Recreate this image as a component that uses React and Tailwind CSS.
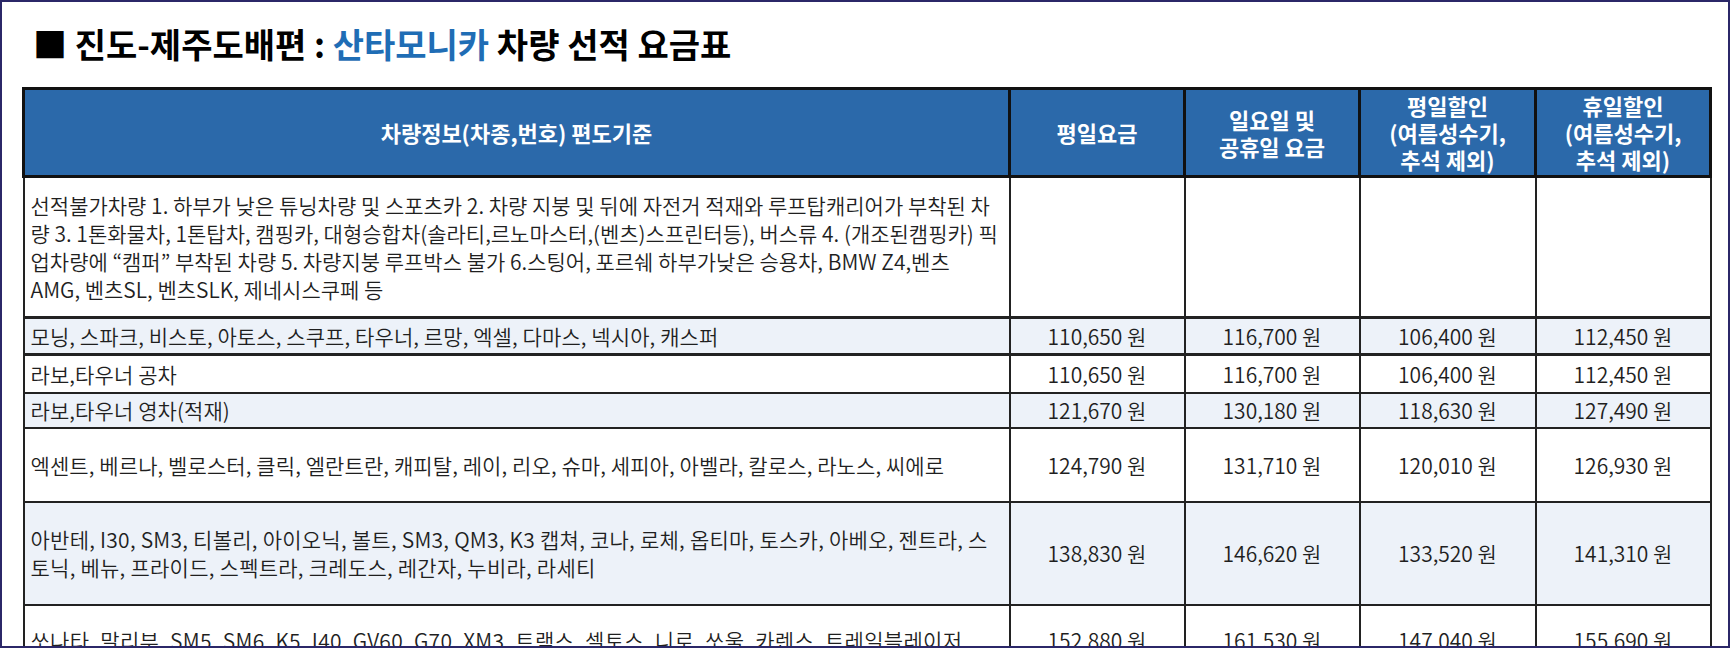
import React from "react";

const rows = [
  {
    text: "선적불가차량 1. 하부가 낮은 튜닝차량 및 스포츠카 2. 차량 지붕 및 뒤에 자전거 적재와 루프탑캐리어가 부착된 차량 3. 1톤화물차, 1톤탑차, 캠핑카, 대형승합차(솔라티,르노마스터,(벤츠)스프린터등), 버스류 4. (개조된캠핑카) 픽업차량에 “캠퍼” 부착된 차량 5. 차량지붕 루프박스 불가 6.스팅어, 포르쉐 하부가낮은 승용차, BMW Z4,벤츠 AMG, 벤츠SL, 벤츠SLK, 제네시스쿠페 등",
    prices: ["", "", "", ""],
    h: "h-[141px]",
    bg: "bg-white",
    tr: "tracking-[0px]",
  },
  {
    text: "모닝, 스파크, 비스토, 아토스, 스쿠프, 타우너, 르망, 엑셀, 다마스, 넥시아, 캐스퍼",
    prices: ["110,650 원", "116,700 원", "106,400 원", "112,450 원"],
    h: "h-[37px]",
    bg: "bg-[#edf2f9]",
    tr: "tracking-[0.1px]",
  },
  {
    text: "라보,타우너 공차",
    prices: ["110,650 원", "116,700 원", "106,400 원", "112,450 원"],
    h: "h-[38px]",
    bg: "bg-white",
    tr: "tracking-[0.1px]",
  },
  {
    text: "라보,타우너 영차(적재)",
    prices: ["121,670 원", "130,180 원", "118,630 원", "127,490 원"],
    h: "h-[35px]",
    bg: "bg-[#edf2f9]",
    tr: "tracking-[0.1px]",
  },
  {
    text: "엑센트, 베르나, 벨로스터, 클릭, 엘란트란, 캐피탈, 레이, 리오, 슈마, 세피아, 아벨라, 칼로스, 라노스, 씨에로",
    prices: ["124,790 원", "131,710 원", "120,010 원", "126,930 원"],
    h: "h-[74px]",
    bg: "bg-white",
    tr: "tracking-[0.1px]",
  },
  {
    text: "아반테, I30, SM3, 티볼리, 아이오닉, 볼트, SM3, QM3, K3 캡쳐, 코나, 로체, 옵티마, 토스카, 아베오, 젠트라, 스토닉, 베뉴, 프라이드, 스펙트라, 크레도스, 레간자, 누비라, 라세티",
    prices: ["138,830 원", "146,620 원", "133,520 원", "141,310 원"],
    h: "h-[103px]",
    bg: "bg-[#edf2f9]",
    tr: "tracking-[0.25px]",
  },
  {
    text: "쏘나타, 말리부, SM5, SM6, K5, I40, GV60, G70, XM3, 트랙스, 셀토스, 니로, 쏘울, 카렌스, 트레일블레이저",
    prices: ["152,880 원", "161,530 원", "147,040 원", "155,690 원"],
    h: "h-[70px]",
    bg: "bg-white",
    tr: "tracking-[0.3px]",
  },
];

const font = { fontFamily: '"Noto Sans CJK KR", "Noto Sans", sans-serif' };

export default function App() {
  return (
    <div
      className="w-[1730px] h-[648px] border-2 border-[#2b2768] bg-white overflow-hidden"
      style={font}
    >
      <div className="pl-[31px] pt-[21px] h-[85px] text-[34px] leading-[42px] font-bold text-black">
        <span>■ 진도-제주도배편 : </span>
        <span className="text-[#1f6db5]">산타모니카</span>
        <span> 차량 선적 요금표</span>
      </div>
      <div className="pl-[20px]">
        <table className="table-fixed border-collapse w-[1687px]">
          <colgroup>
            <col className="w-[986px]" />
            <col className="w-[175px]" />
            <col className="w-[175px]" />
            <col className="w-[176px]" />
            <col className="w-[175px]" />
          </colgroup>
          <thead>
            <tr className="h-[88px] bg-[#2b69aa] text-white font-bold text-[22px] leading-[27px]">
              <th className="border-[3px] border-[#111] align-middle text-center">
                차량정보(차종,번호) 편도기준
              </th>
              <th className="border-[3px] border-[#111] align-middle text-center">
                평일요금
              </th>
              <th className="border-[3px] border-[#111] align-middle text-center">
                일요일 및<br />공휴일 요금
              </th>
              <th className="border-[3px] border-[#111] align-middle text-center">
                평일할인<br />(여름성수기,<br />추석 제외)
              </th>
              <th className="border-[3px] border-[#111] align-middle text-center">
                휴일할인<br />(여름성수기,<br />추석 제외)
              </th>
            </tr>
          </thead>
          <tbody className="text-[21px] leading-[28px] text-[#1f1f1f] font-[350]">
            {rows.map((r, i) => (
              <tr key={i} className={`${r.h} ${r.bg}`}>
                <td
                  className={`border-2 border-[#222] px-[6px] align-middle text-left ${r.tr} ${
                    i <= 1 ? "border-b-[3px]" : ""
                  }`}
                >
                  {r.text}
                </td>
                {r.prices.map((p, j) => (
                  <td
                    key={j}
                    className={`border-2 border-[#222] align-middle text-center ${
                      i <= 1 ? "border-b-[3px]" : ""
                    }`}
                  >
                    {p}
                  </td>
                ))}
              </tr>
            ))}
          </tbody>
        </table>
      </div>
    </div>
  );
}
